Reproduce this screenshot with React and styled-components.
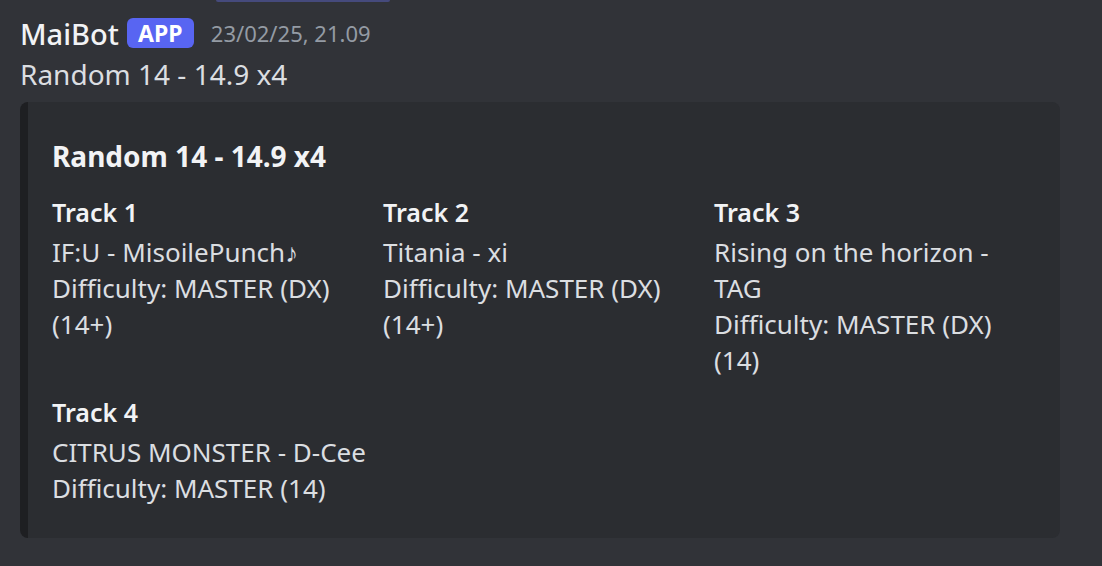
import styled, {createGlobalStyle} from 'styled-components';

const GlobalStyle = createGlobalStyle`
  body {
    margin: 0;
    background: #313338;
    font-family: "Noto Sans", "Open Sans", sans-serif;
    color: #dbdee1;
  }
`

const Page = styled.div`
  width: 1102px;
  height: 566px;
  overflow: hidden;
  padding: 0 42px 0 20px;
  box-sizing: border-box;
`

const TopStub = styled.div`
  margin-left: 196px;
  width: 174px;
  height: 2px;
  background: #454a7c;
  border-radius: 0 0 4px 4px;
`

const Header = styled.div`
  display: flex;
  align-items: center;
  height: 30px;
  margin-top: 16px;
`

const Username = styled.span`
  font-size: 29px;
  font-weight: 500;
  color: #f2f3f5;
`

const AppBadge = styled.span`
  margin-left: 8px;
  height: 30px;
  width: 67px;
  justify-content: center;
  display: inline-flex;
  align-items: center;
  background: #5865f2;
  border-radius: 6px;
  color: #fff;
  font-size: 23px;
  font-weight: 700;
`

const Timestamp = styled.span`
  margin-left: 17px;
  font-size: 22px;
  color: #949ba4;
`

const Content = styled.div`
  margin-top: 8px;
  font-size: 28px;
  line-height: 36px;
`

const Embed = styled.div`
  margin-top: 10px;
  background: #2b2d31;
  border-left: 8px solid #1e1f22;
  border-radius: 8px;
  padding: 36px 32px 32px 24px;
`

const EmbedTitle = styled.div`
  font-size: 28px;
  font-weight: 700;
  color: #f2f3f5;
  line-height: 36px;
`

const Fields = styled.div`
  margin-top: 22px;
  display: grid;
  grid-template-columns: repeat(3, 315px);
  column-gap: 16px;
  row-gap: 18px;
`

const Field = styled.div`
  display: flex;
  flex-direction: column;
`

const FieldName = styled.div`
  font-size: 25px;
  font-weight: 600;
  color: #f2f3f5;
  line-height: 32px;
  margin-bottom: 6px;
`

const FieldValue = styled.div`
  font-size: 26px;
  line-height: 36px;
  color: #dbdee1;
`

const tracks = [
  {name: 'Track 1', song: 'IF:U - MisoilePunch♪', diff: 'Difficulty: MASTER (DX) (14+)'},
  {name: 'Track 2', song: 'Titania - xi', diff: 'Difficulty: MASTER (DX) (14+)'},
  {name: 'Track 3', song: 'Rising on the horizon - TAG', diff: 'Difficulty: MASTER (DX) (14)'},
  {name: 'Track 4', song: 'CITRUS MONSTER - D-Cee', diff: 'Difficulty: MASTER (14)'},
]

export default function App() {
  return (
    <>
      <GlobalStyle/>
      <Page>
        <TopStub/>
        <Header>
          <Username>MaiBot</Username>
          <AppBadge>APP</AppBadge>
          <Timestamp>23/02/25, 21.09</Timestamp>
        </Header>
        <Content>Random 14 - 14.9 x4</Content>
        <Embed>
          <EmbedTitle>Random 14 - 14.9 x4</EmbedTitle>
          <Fields>
            {tracks.map(t => (
              <Field key={t.name}>
                <FieldName>{t.name}</FieldName>
                <FieldValue>{t.song}<br/>{t.diff}</FieldValue>
              </Field>
            ))}
          </Fields>
        </Embed>
      </Page>
    </>
  )
}
